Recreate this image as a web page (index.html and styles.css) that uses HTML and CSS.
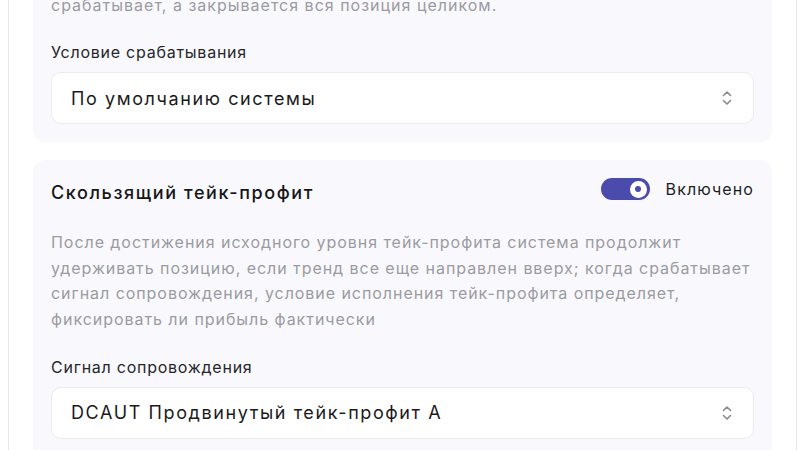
FILE: index.html
```html
<!DOCTYPE html>
<html lang="ru">
<head>
<meta charset="utf-8">
<title>Настройки тейк-профита</title>
<link rel="stylesheet" href="styles.css">
</head>
<body>
<div class="panel">
  <section class="card card-first">
    <p class="desc desc-top">Ордер не исполняется частично, когда условие стоп-лосса<br>срабатывает, а закрывается вся позиция целиком.</p>
    <div class="field">
      <div class="label">Условие срабатывания</div>
      <div class="select">
        <span class="select-value">По умолчанию системы</span>
        <svg class="chev" width="10" height="16" viewBox="0 0 10 16" aria-hidden="true">
          <path d="M1.5 5.5 L5 2 L8.5 5.5" fill="none" stroke="#8a8a90" stroke-width="1.6" stroke-linecap="round" stroke-linejoin="round"/>
          <path d="M1.5 10.5 L5 14 L8.5 10.5" fill="none" stroke="#8a8a90" stroke-width="1.6" stroke-linecap="round" stroke-linejoin="round"/>
        </svg>
      </div>
    </div>
  </section>

  <section class="card">
    <div class="card-head">
      <h2 class="title">Скользящий тейк-профит</h2>
      <div class="switch-wrap">
        <span class="switch"><span class="knob"></span></span>
        <span class="switch-label">Включено</span>
      </div>
    </div>
    <p class="desc desc-main">После достижения исходного уровня тейк-профита система продолжит<br>удерживать позицию, если тренд все еще направлен вверх; когда срабатывает<br>сигнал сопровождения, условие исполнения тейк-профита определяет,<br>фиксировать ли прибыль фактически</p>
    <div class="field">
      <div class="label">Сигнал сопровождения</div>
      <div class="select">
        <span class="select-value">DCAUT Продвинутый тейк-профит A</span>
        <svg class="chev" width="10" height="16" viewBox="0 0 10 16" aria-hidden="true">
          <path d="M1.5 5.5 L5 2 L8.5 5.5" fill="none" stroke="#8a8a90" stroke-width="1.6" stroke-linecap="round" stroke-linejoin="round"/>
          <path d="M1.5 10.5 L5 14 L8.5 10.5" fill="none" stroke="#8a8a90" stroke-width="1.6" stroke-linecap="round" stroke-linejoin="round"/>
        </svg>
      </div>
    </div>
  </section>
</div>
</body>
</html>
```

FILE: styles.css
```css
html, body {
  margin: 0;
  padding: 0;
  background: #ffffff;
  overflow: hidden;
}
body {
  font-family: Inter, "Noto Sans", sans-serif;
  color: #1c1c1f;
  height: 450px;
}
.panel {
  margin-left: 8px;
  width: 789px;
  box-sizing: border-box;
  border-left: 1px solid #e6e6eb;
  border-right: 1px solid #e6e6eb;
  padding: 0 24px;
  margin-top: -51px;
  display: flex;
  flex-direction: column;
  gap: 18px;
}
.card {
  background: #f9f9fd;
  border-radius: 12px;
  padding: 18px;
  display: flex;
  flex-direction: column;
}
.card-head {
  display: flex;
  justify-content: space-between;
  align-items: flex-start;
  margin-bottom: 23px;
  padding-top: 1px;
}
.title {
  margin: 0;
  font-size: 18px;
  line-height: 28px;
  font-weight: 500;
  letter-spacing: 1.6px;
  color: #161618;
}
.switch-wrap {
  display: flex;
  align-items: center;
  gap: 16px;
  height: 22px;
  margin-top: -1px;
}
.switch {
  width: 49px;
  height: 22px;
  border-radius: 11px;
  background: #4b4bae;
  display: flex;
  align-items: center;
  justify-content: flex-end;
  padding: 0 3px;
  box-sizing: border-box;
}
.knob {
  width: 17px;
  height: 17px;
  border-radius: 50%;
  background: #ffffff;
  display: flex;
  align-items: center;
  justify-content: center;
}
.knob::after {
  content: "";
  width: 6px;
  height: 6px;
  border-radius: 50%;
  background: #4b4bae;
}
.switch-label {
  font-size: 16px;
  line-height: 22px;
  letter-spacing: 1.1px;
  color: #1c1c1f;
}
.desc {
  margin: 0;
  font-size: 16px;
  line-height: 25.6px;
  color: #9b9ba1;
  white-space: nowrap;
}
.desc-top {
  letter-spacing: 1px;
}
.desc-main {
  letter-spacing: 0.95px;
}
.field {
  margin-top: 22px;
}
.label {
  font-size: 16px;
  line-height: 24px;
  letter-spacing: 0.75px;
  color: #26262a;
  margin-bottom: 8px;
}
.select {
  height: 52px;
  box-sizing: border-box;
  background: #ffffff;
  border: 1px solid #ececf0;
  border-radius: 10px;
  display: flex;
  align-items: center;
  justify-content: space-between;
  padding: 0 21px 0 19px;
}
.select-value {
  font-size: 18px;
  letter-spacing: 1.6px;
  color: #1a1a1d;
}
.chev {
  display: block;
}
```
